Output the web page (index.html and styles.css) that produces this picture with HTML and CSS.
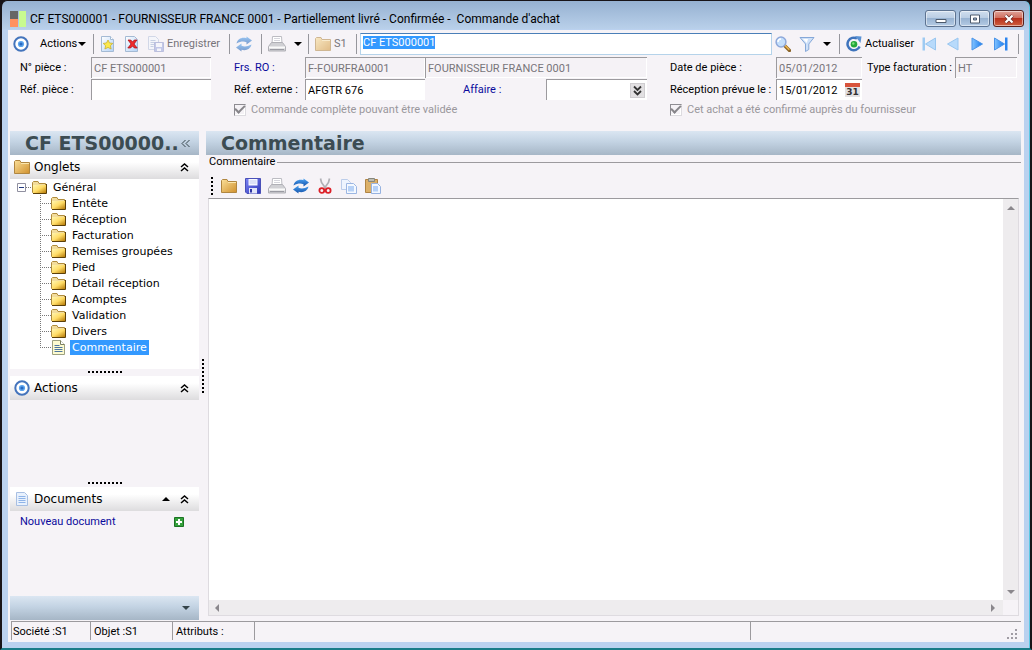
FILE: index.html
```html
<!DOCTYPE html>
<html lang="fr">
<head>
<meta charset="utf-8">
<title>Commande d'achat</title>
<link rel="stylesheet" href="styles.css">
</head>
<body>
<svg class="sprite" aria-hidden="true">
  <defs>
    <linearGradient id="gFolder" x1="0" y1="0" x2="1" y2="1"><stop offset="0" stop-color="#fbe09a"/><stop offset="1" stop-color="#d0902c"/></linearGradient>
    <linearGradient id="gTree" x1="0" y1="0" x2="1" y2="1"><stop offset="0" stop-color="#fff6b0"/><stop offset=".5" stop-color="#ffdc66"/><stop offset="1" stop-color="#b67a08"/></linearGradient>
    <linearGradient id="gPage" x1="0" y1="0" x2="1" y2="1"><stop offset="0" stop-color="#ffffff"/><stop offset="1" stop-color="#b4d2f6"/></linearGradient>
    <linearGradient id="gPlay" x1="0" y1="0" x2="1" y2="0"><stop offset="0" stop-color="#84c4ff"/><stop offset="1" stop-color="#1478ee"/></linearGradient>
    <linearGradient id="gSync" x1="0" y1="0" x2="0" y2="1"><stop offset="0" stop-color="#4aa4f4"/><stop offset="1" stop-color="#1450a8"/></linearGradient>
    <linearGradient id="gFloppy" x1="0" y1="0" x2="1" y2="1"><stop offset="0" stop-color="#7c84f4"/><stop offset="1" stop-color="#3038b8"/></linearGradient>
  </defs>
  <symbol id="target" viewBox="0 0 16 16"><circle cx="8" cy="8" r="6.7" fill="#fff" stroke="#4474bc" stroke-width="2"/><circle cx="8" cy="8" r="3.1" fill="#5ba4ee"/><circle cx="8" cy="8" r="1.6" fill="#2968c0"/></symbol>
  <symbol id="page-star" viewBox="0 0 16 16"><path d="M1.500.500h9l3 3v12h-12z" fill="url(#gPage)" stroke="#a4bad4"/><path d="M10.500.500v3h3" fill="#fff" stroke="#a4bad4"/><path d="M8 4l1.500 3 3.300.4-2.400 2.300.7 3.300L8 11.400 4.900 13l.7-3.300-2.400-2.300L6.500 7z" fill="#fbe94c" stroke="#ccb02c" stroke-width=".8"/></symbol>
  <symbol id="page-x" viewBox="0 0 16 16"><path d="M1.500.500h9l3 3v12h-12z" fill="url(#gPage)" stroke="#a4bad4"/><path d="M4 4h2.800L8.500 6l1.800-2H13l-3 4 3.200 4h-2.800L8.500 10l-1.900 2H3.800L7 8z" fill="#ee2b2c" stroke="#a80a12" stroke-width=".7"/></symbol>
  <symbol id="page-save" viewBox="0 0 16 16"><path d="M.500.500h7l3 3v10H.500z" fill="#f4f7fd" stroke="#b4c1da"/><path d="M2.500 4.500h5M2.500 6.500h6M2.500 8.500h4M2.500 10.500h3" stroke="#9fb4d4"/><path d="M6.500 6.500h9v9h-9z" fill="#98a5dc" stroke="#8b96c8"/><path d="M8 7h6v4H8zM9 12.500h4V15H9z" fill="#f5f7fe"/></symbol>
  <symbol id="sync" viewBox="0 0 16 16"><path d="M.500 7.500C1.500 3 6 .800 10.500 2.300V.500L16 4.600l-5.500 4V6.300C7.500 5 4.500 5.500.500 7.500z" fill="url(#gSync)"/><path d="M15.500 8.500c-1 4.500-5.500 6.700-10 5.200v1.800L0 11.400l5.500-4v2.300c3 1.300 6 .8 10-1.200z" fill="url(#gSync)"/></symbol>
  <symbol id="printer" viewBox="0 0 18 16"><path d="M4.500.500h9l.5 7H4z" fill="#fff" stroke="#bcbcc2"/><path d="M6 2.500h6M6 4.500h6" stroke="#d5d5dc"/><path d="M3.500 6.500h11l3 4v4.500H.500v-4.500z" fill="#d0d0d4" stroke="#b0b0b6"/><path d="M1 10.500h16v2H1z" fill="#fafafa"/><path d="M2 13.500h14" stroke="#9a9aa2"/></symbol>
  <symbol id="folder" viewBox="0 0 16 16"><path d="M.500 14.500V2.500l1-1H6l1 2h8.500v11z" fill="url(#gFolder)" stroke="#b08640"/><path d="M7 4.500h8" stroke="#fbe6ac"/></symbol>
  <symbol id="tree-folder" viewBox="0 0 15 13"><path d="M.500 11.500v-10L1.500.500H6l1 2h6.500v9z" fill="#f2dc9c" stroke="#b08c3c"/><path d="M1 4h13v8H1z" fill="url(#gTree)"/><path d="M14.500 3v9.500H1" fill="none" stroke="#5c4008"/></symbol>
  <symbol id="note" viewBox="0 0 13 15"><path d="M.500.500h8l4 4v10H.500z" fill="#fdfbd0" stroke="#9ca080"/><path d="M8.500.500v4h4" fill="#fff" stroke="#7c8060"/><path d="M2.500 5.500h5M2.500 7.500h8M2.500 9.500h8M2.500 11.500h8" stroke="#4d75a0"/></symbol>
  <symbol id="doc" viewBox="0 0 16 16"><path d="M2.500 1.500h8l3 3v10h-11z" fill="#e8f1fd" stroke="#a8bfe2"/><path d="M4.500 5.500h7M4.500 7.500h7M4.500 9.500h7M4.500 11.500h7" stroke="#8fb4e8"/></symbol>
  <symbol id="lens" viewBox="0 0 16 16"><path d="M9.500 9.500l5 5" stroke="#8a6428" stroke-width="3.200" stroke-linecap="round"/><path d="M9.800 9.300l4.500 4.500" stroke="#eeb64c" stroke-width="1.500"/><circle cx="6" cy="6" r="4.900" fill="#c4dffc" stroke="#8ea8da" stroke-width="1.500"/><path d="M3 6a3 3 0 0 1 3-3" stroke="#fff" stroke-width="1.500" fill="none"/></symbol>
  <symbol id="funnel" viewBox="0 0 16 16"><path d="M1 1.500h14L9.800 8v5.500L6.500 15.500V8z" fill="#cfe1f8" stroke="#86a8d8"/><path d="M4 3h5L7.800 7z" fill="#fff"/></symbol>
  <symbol id="reload" viewBox="0 0 16 16"><path d="M13.600 10.500A6.300 6.300 0 1 1 11 2.500" fill="none" stroke="#3f74bc" stroke-width="2.500"/><path d="M9 0l6.500.500L14.500 7z" fill="#5a92d4"/><circle cx="8" cy="8.300" r="3.300" fill="#25a83a"/><circle cx="7.300" cy="7.500" r="1.200" fill="#7fe07c"/></symbol>
  <symbol id="last" viewBox="0 0 16 16"><path d="M1.500 2L11.500 8l-10 6z" fill="url(#gPlay)" stroke="#4b94e8"/><path d="M12 1.500h2.500v13H12z" fill="#2c84ee"/></symbol>
  <symbol id="next" viewBox="0 0 16 16"><path d="M3 2l10.500 6L3 14z" fill="url(#gPlay)" stroke="#4b94e8"/></symbol>
  <symbol id="first" viewBox="0 0 16 16"><path d="M14.500 2L4.500 8l10 6z" fill="#b8dafb" stroke="#98c6f0"/><path d="M1.500 1.500H4v13H1.500z" fill="#9ecaf2"/></symbol>
  <symbol id="prev" viewBox="0 0 16 16"><path d="M13 2L2.500 8 13 14z" fill="#b8dafb" stroke="#98c6f0"/></symbol>
  <symbol id="floppy" viewBox="0 0 16 16"><path d="M.500.500h15v15H2L.500 14z" fill="url(#gFloppy)" stroke="#4a50b8"/><path d="M3.500 1h9v6.500h-9z" fill="#f6f8ff"/><path d="M4.500 3h7M4.500 5h7" stroke="#c4cbee"/><path d="M4 10h8v5.500H4z" fill="#e2e5f8"/><path d="M5 11h2v3.500H5z" fill="#3036a4"/></symbol>
  <symbol id="scissors" viewBox="0 0 16 16"><path d="M3.500.500l1 4 4.300 6M12.500.500l-1 4-4.300 6" fill="none" stroke="#b0b0b6" stroke-width="1.700"/><circle cx="4.800" cy="12.500" r="2.400" fill="none" stroke="#dc2028" stroke-width="1.800"/><circle cx="11.200" cy="12.500" r="2.400" fill="none" stroke="#dc2028" stroke-width="1.800"/></symbol>
  <symbol id="copy" viewBox="0 0 16 16"><path d="M.500 1.500h6l3 3v7h-9z" fill="#eef4fe" stroke="#bccdea"/><path d="M5.500 5.500h7l3 3v7h-10z" fill="#f5f9ff" stroke="#9cb6e2"/><path d="M7 8h6v5.500H7z" fill="#b7d1f6"/></symbol>
  <symbol id="paste" viewBox="0 0 16 16"><path d="M.500 1.500h12v13H.500z" fill="#dcb068" stroke="#b08444"/><path d="M3.500.500h6v3h-6z" fill="#bcbcb4" stroke="#87877c"/><path d="M6.500 5.500h6l3 3v7h-9z" fill="#f2f7ff" stroke="#97b2e0"/><path d="M8 8h5v5.500H8z" fill="#b4d0f8"/></symbol>
  <symbol id="caret" viewBox="0 0 8 4"><path d="M0 0h8L4 4z"/></symbol>
  <symbol id="up" viewBox="0 0 8 4"><path d="M0 4h8L4 0z"/></symbol>
  <symbol id="chev-up" viewBox="0 0 9 9"><path d="M1 4l3.500-3L8 4M1 8l3.500-3L8 8" fill="none" stroke="#000" stroke-width="1.500"/></symbol>
</svg>

<div class="window">
  <header class="titlebar">
    <svg class="logo" viewBox="0 0 16 16" aria-hidden="true"><path d="M0 0h8v8H0z" fill="#666"/><path d="M0 8h8v8H0z" fill="#ff9160"/><path d="M9 0h7v16H9z" fill="#c8fa90"/></svg>
    <h1 class="caption">CF ETS000001 - FOURNISSEUR FRANCE 0001 - Partiellement livré - Confirmée -&nbsp; Commande d'achat</h1>
    <button class="winbtn" aria-label="Réduire"><svg viewBox="0 0 12 10"><path d="M1 5.500h10v3H1z" fill="#fff" stroke="#4c5a6c"/></svg></button>
    <button class="winbtn" aria-label="Agrandir"><svg viewBox="0 0 12 10"><path d="M1.500 1h9v8h-9z" fill="#fff" stroke="#4c5a6c"/><path d="M4.500 4h3v2h-3z" fill="#a4bad4" stroke="#4c5a6c"/></svg></button>
    <button class="winbtn close" aria-label="Fermer"><svg viewBox="0 0 12 10"><path d="M2.500 1.500l7 7m0-7l-7 7" stroke="#6a2c28" stroke-width="3.600"/><path d="M2.500 1.500l7 7m0-7l-7 7" stroke="#fff" stroke-width="2.200"/></svg></button>
  </header>

  <div class="client">
    <div class="toolbar">
      <div class="group first"><svg class="i"><use href="#target"/></svg><button class="tool menu">Actions<svg class="caret"><use href="#caret"/></svg></button></div>
      <div class="group save">
        <button class="tool" aria-label="Nouveau"><svg class="i"><use href="#page-star"/></svg></button>
        <button class="tool" aria-label="Supprimer"><svg class="i"><use href="#page-x"/></svg></button>
        <button class="tool muted"><svg class="i faded"><use href="#page-save"/></svg>Enregistrer</button>
      </div>
      <div class="group sync"><button class="tool" aria-label="Rafraîchir"><svg class="i faded"><use href="#sync"/></svg></button></div>
      <div class="group print"><button class="tool" aria-label="Imprimer"><svg class="i wide"><use href="#printer"/></svg></button><button class="tool" aria-label="Options d'impression"><svg class="caret"><use href="#caret"/></svg></button></div>
      <div class="group site"><button class="tool muted"><svg class="i faded"><use href="#folder"/></svg>S1</button></div>
      <div class="group search"><input class="find" id="find" aria-label="Pièce" value="CF ETS000001" spellcheck="false" autofocus></div>
      <div class="lookup">
        <button class="tool" aria-label="Rechercher"><svg class="i"><use href="#lens"/></svg></button>
        <button class="tool" aria-label="Filtrer"><svg class="i"><use href="#funnel"/></svg></button>
        <button class="tool" aria-label="Options de filtre"><svg class="caret"><use href="#caret"/></svg></button>
      </div>
      <div class="group nav">
        <button class="tool act"><svg class="i"><use href="#reload"/></svg>Actualiser</button>
        <button class="tool" aria-label="Premier"><svg class="i"><use href="#first"/></svg></button>
        <button class="tool" aria-label="Précédent"><svg class="i"><use href="#prev"/></svg></button>
        <button class="tool" aria-label="Suivant"><svg class="i"><use href="#next"/></svg></button>
        <button class="tool" aria-label="Dernier"><svg class="i"><use href="#last"/></svg></button>
      </div>
      <div class="group end"></div>
    </div>

    <form class="fields">
      <label class="c1" for="piece">N° pièce :</label><input class="c2" id="piece" value="CF ETS000001" disabled>
      <label class="c4 blue" for="frs">Frs. RO :</label><input class="c5" id="frs" value="F-FOURFRA0001" disabled>
      <input class="c6" aria-label="Nom du fournisseur" value="FOURNISSEUR FRANCE 0001" disabled>
      <label class="c8" for="date">Date de pièce :</label><input class="c9" id="date" value="05/01/2012" disabled>
      <label class="c11" for="type">Type facturation :</label><input class="c12" id="type" value="HT" disabled>

      <label class="c1" for="ref">Réf. pièce :</label><input class="c2" id="ref">
      <label class="c4" for="ext">Réf. externe :</label><input class="c5" id="ext" value="AFGTR 676">
      <div class="c6 affaire"><label class="blue" for="aff">Affaire :</label><div class="combo"><input id="aff"><button type="button" class="drop" aria-label="Choisir"><svg viewBox="0 0 9 11"><path d="M1 1.500L4.500 5 8 1.500M1 6l3.500 3.500L8 6" fill="none" stroke="#333" stroke-width="1.800"/></svg></button></div></div>
      <label class="c8" for="prev-date">Réception prévue le :</label>
      <div class="c9 combo"><input id="prev-date" value="15/01/2012"><button type="button" class="cal" aria-label="Calendrier">31</button></div>

      <label class="check left"><input type="checkbox" checked disabled>Commande complète pouvant être validée</label>
      <label class="check right"><input type="checkbox" checked disabled>Cet achat a été confirmé auprès du fournisseur</label>
    </form>

    <div class="body">
      <aside class="side">
        <div class="banner"><h2>CF ETS00000..</h2><button class="tool" aria-label="Replier"><svg class="dbl" viewBox="0 0 9 9"><path d="M4.500 1L1 4.500 4.500 8M8.500 1L5 4.500 8.500 8" fill="none" stroke="#35444a"/></svg></button></div>
        <div class="head"><svg class="i"><use href="#folder"/></svg><h3>Onglets</h3><button class="tool" aria-label="Replier Onglets"><svg class="chev"><use href="#chev-up"/></svg></button></div>
        <div class="tree">
          <div class="root"><svg class="box" viewBox="0 0 9 9"><path d="M.500.500h8v8h-8z" fill="#fff" stroke="#9090a0"/><path d="M2 4.500h5" stroke="#223a80"/></svg><svg class="fold"><use href="#tree-folder"/></svg><a href="#general">Général</a></div>
          <ul>
            <li><svg class="fold"><use href="#tree-folder"/></svg><a href="#entete">Entête</a></li>
            <li><svg class="fold"><use href="#tree-folder"/></svg><a href="#reception">Réception</a></li>
            <li><svg class="fold"><use href="#tree-folder"/></svg><a href="#facturation">Facturation</a></li>
            <li><svg class="fold"><use href="#tree-folder"/></svg><a href="#remises">Remises groupées</a></li>
            <li><svg class="fold"><use href="#tree-folder"/></svg><a href="#pied">Pied</a></li>
            <li><svg class="fold"><use href="#tree-folder"/></svg><a href="#detail">Détail réception</a></li>
            <li><svg class="fold"><use href="#tree-folder"/></svg><a href="#acomptes">Acomptes</a></li>
            <li><svg class="fold"><use href="#tree-folder"/></svg><a href="#validation">Validation</a></li>
            <li><svg class="fold"><use href="#tree-folder"/></svg><a href="#divers">Divers</a></li>
            <li><svg class="fold leaf"><use href="#note"/></svg><a class="on" href="#commentaire">Commentaire</a></li>
          </ul>
        </div>
        <div class="grip"></div>
        <div class="head"><svg class="i"><use href="#target"/></svg><h3>Actions</h3><button class="tool" aria-label="Replier Actions"><svg class="chev"><use href="#chev-up"/></svg></button></div>
        <div class="void"></div>
        <div class="grip"></div>
        <div class="head"><svg class="i"><use href="#doc"/></svg><h3>Documents</h3><button class="tool" aria-label="Monter"><svg class="caret"><use href="#up"/></svg></button><button class="tool" aria-label="Replier Documents"><svg class="chev"><use href="#chev-up"/></svg></button></div>
        <div class="docs"><a href="#nouveau">Nouveau document</a><button class="tool" aria-label="Ajouter"><svg class="plus" viewBox="0 0 10 10"><path d="M.500.500h9v9h-9z" fill="#35a03c" stroke="#1c7424"/><path d="M5 2v6M2 5h6" stroke="#fff" stroke-width="2"/></svg></button></div>
        <div class="foot"><button class="tool" aria-label="Plus"><svg class="caret"><use href="#caret"/></svg></button></div>
      </aside>
      <div class="splitter"><span></span></div>
      <main class="main">
        <div class="banner"><h2>Commentaire</h2></div>
        <fieldset>
          <legend>Commentaire</legend>
          <div class="tools">
            <span class="handle"></span>
            <button class="tool" aria-label="Ouvrir"><svg class="i"><use href="#folder"/></svg></button>
            <button class="tool" aria-label="Enregistrer"><svg class="i"><use href="#floppy"/></svg></button>
            <button class="tool printing" aria-label="Imprimer"><svg class="i wide"><use href="#printer"/></svg></button>
            <button class="tool" aria-label="Actualiser"><svg class="i"><use href="#sync"/></svg></button>
            <button class="tool" aria-label="Couper"><svg class="i"><use href="#scissors"/></svg></button>
            <button class="tool" aria-label="Copier"><svg class="i"><use href="#copy"/></svg></button>
            <button class="tool" aria-label="Coller"><svg class="i"><use href="#paste"/></svg></button>
          </div>
          <div class="editor">
            <textarea aria-label="Commentaire"></textarea>
            <div class="bar v"><svg viewBox="0 0 8 4"><use href="#up"/></svg><svg viewBox="0 0 8 4"><use href="#caret"/></svg></div>
            <div class="bar h"><svg viewBox="0 0 4 8"><path d="M4 0v8L0 4z"/></svg><svg viewBox="0 0 4 8"><path d="M0 0v8l4-4z"/></svg></div>
          </div>
        </fieldset>
      </main>
    </div>

    <footer class="status">
      <span class="s1">Société :S1</span><span class="s2">Objet :S1</span><span class="s3">Attributs :</span><span class="s4"></span><span class="s5"><svg viewBox="0 0 11 11"><path d="M9 0h2v2H9zM9 4h2v2H9zM5 4h2v2H5zM9 8h2v2H9zM5 8h2v2H5zM1 8h2v2H1z" fill="#a09ca4"/></svg></span>
    </footer>
  </div>
</div>
<script src="app.js"></script>
</body>
</html>
```
FILE: app.js
```js
const find = document.getElementById("find");
find.focus();
find.select();
```
FILE: styles.css
```css
* { box-sizing: border-box; }
html, body { height: 100%; }
body {
  margin: 0;
  background: #181418;
  font: 11px/14px Roboto, "Liberation Sans", Arial, sans-serif;
  color: #000;
}
h1, h2, h3, ul, fieldset { margin: 0; padding: 0; border: 0; font-weight: normal; }
button, input, textarea { font: inherit; color: inherit; border: 0; margin: 0; padding: 0; }
button { background: none; }
a { color: inherit; text-decoration: none; }
svg { display: block; flex: none; }
.sprite { position: absolute; width: 0; height: 0; }
.i { width: 16px; height: 16px; }
.i.wide { width: 18px; }
.faded { opacity: .55; }
.caret { width: 8px; height: 4px; }
.chev { width: 9px; height: 9px; }

.window {
  display: flex;
  flex-direction: column;
  height: 100%;
  padding: 2px 6px 6px;
  border: 2px solid #181418;
  border-top-width: 1px;
  border-bottom-color: #1a7c88;
  border-radius: 7px 7px 0 0;
  box-shadow: inset -1px 0 #5cc8e4;
  background: #bad1ef linear-gradient(#96b1d1, #b9d0ea 28px, #bad1ef 28px);
}
.titlebar { display: flex; align-items: center; height: 27px; padding: 4px 0 0 2px; gap: 3px; flex: none; }
.logo { width: 16px; height: 16px; }
.caption { flex: 1; font: 12px/16px Roboto, "Noto Sans", sans-serif; white-space: nowrap; overflow: hidden; padding-left: 1px; }
.winbtn {
  display: flex; align-items: center; justify-content: center;
  width: 31px; height: 17px;
  border: 1px solid #5d7391; border-radius: 3px;
  background: linear-gradient(#d0deee, #b8cce3 50%, #98b3d2 50%, #b4cbe4);
  box-shadow: inset 0 0 0 1px rgba(255, 255, 255, .5);
}
.winbtn svg { width: 12px; height: 10px; }
.winbtn.close { border-color: #59201c; background: linear-gradient(#e0a298, #cf6b5a 50%, #b8301c 50%, #cf6040); }

.client { flex: 1; display: flex; flex-direction: column; min-height: 0; background: #f6f3f7; }

.toolbar { display: flex; align-items: center; height: 27px; padding-left: 5px; flex: none; }
.group { display: flex; align-items: center; height: 20px; border-left: 1px solid #96969c; padding-left: 6px; gap: 8px; flex: none; }
.group.first { border: 0; padding: 0; width: 80px; gap: 11px; }
.tool { display: flex; align-items: center; gap: 3px; white-space: nowrap; }
.tool.menu { gap: 1px; }
.muted { color: #77747a; }
.save { width: 136px; }
.sync { width: 32px; }
.print { width: 47px; }
.site { width: 48px; }
.search { flex: 1; padding-left: 3px; }
.find {
  flex: 1; min-width: 0; height: 22px; padding: 0 2px 2px; outline: 0;
  background: #fff; border: 1px solid #b5d3ea; border-top-color: #4a7fb8;
}
.find::selection { background: #3399ff; color: #fff; }
.lookup { display: flex; align-items: center; gap: 8px; width: 67px; padding-left: 3px; flex: none; }
.nav { width: 179px; }
.act { width: 67px; }
.end { width: 6px; padding: 0; }

.fields {
  display: grid;
  grid-template-columns: 71px 120px 23px 71px 120px 1fr 23px 106px 86px 5px 88px 62px;
  grid-template-rows: 21px 21px 17px;
  row-gap: 1px;
  padding: 0 7px 13px 12px;
  flex: none;
}
.fields > label { align-self: center; white-space: nowrap; }
.fields input:not([type]) {
  width: 100%; min-width: 0; height: 21px; padding: 0 0 0 2px;
  border: solid #9c9a9e; border-width: 1px 0 0 1px; background: #fff;
}
.fields input:disabled { background: #f5f2f6; color: #78757a; box-shadow: inset 0 -1px #fff, inset -1px 0 #fff; }
.c1 { grid-column: 1; } .c2 { grid-column: 2; } .c4 { grid-column: 4; } .c5 { grid-column: 5; }
.c6 { grid-column: 6; } .c8 { grid-column: 8; } .c9 { grid-column: 9; } .c11 { grid-column: 11; } .c12 { grid-column: 12; }
.blue, .docs a { color: #0a0a9c; }
.affaire { display: grid; grid-template-columns: 1fr 101px; align-items: center; padding-left: 38px; }
.combo { display: flex; align-items: center; background: #fff; border-top: 1px solid #9c9a9e; height: 21px; }
.fields .combo input { flex: 1; border-top: 0; height: 20px; }
.drop { width: 15px; height: 15px; margin: 0 2px; background: #e2e0e2; border: 1px solid #cfcdd0; flex: none; display: flex; align-items: center; justify-content: center; }
.drop svg { width: 9px; height: 11px; }
.cal {
  width: 15px; height: 14px; margin-right: 2px; flex: none;
  border-top: 4px solid #d8543c; background: #e3e1e2;
  font: bold 9px/10px "DejaVu Sans", sans-serif; color: #333;
}
.check { grid-row: 3; display: flex; align-items: center; gap: 5px; color: #9a979c; }
.check.left { grid-column: 4 / 7; }
.check.right { grid-column: 8 / 13; }
.check input {
  appearance: none; width: 12px; height: 12px;
  display: flex; align-items: center; justify-content: center;
  border: 1px solid #8e8c92; border-right-color: #dddbe0; border-bottom-color: #dddbe0;
}
.check input:checked::before {
  content: ""; width: 8px; height: 4px; margin-bottom: 3px;
  border: solid #87858a; border-width: 0 0 2px 2px;
  transform: rotate(-45deg);
}
.check .fields input:disabled { box-shadow: none; }

.body { flex: 1; display: flex; min-height: 0; padding: 0 3px 0 2px; }
.side { width: 189px; flex: none; display: flex; flex-direction: column; font-family: "DejaVu Sans", Verdana, sans-serif; }
.banner {
  display: flex; align-items: center; height: 24px; padding: 0 9px 0 15px; flex: none;
  background: linear-gradient(#dbe6f2, #c3d3e3 45%, #a6b6c6);
}
.banner h2 { flex: 1; font: bold 19px/24px "DejaVu Sans", Verdana, sans-serif; color: #3c4c52; white-space: nowrap; }
.dbl { width: 9px; height: 9px; }
.head {
  display: flex; align-items: center; gap: 10px; height: 24px; padding: 0 10px 0 4px; flex: none;
  background: linear-gradient(#fff 30%, #dddcde);
}
.head h3 { flex: 1; font-size: 12px; line-height: 24px; margin-left: -6px; }
.tree { background: #fff; height: 190px; flex: none; font-size: 11px; line-height: 15px; }
.root { display: flex; align-items: center; height: 16px; padding-left: 7px; }
.box { width: 9px; height: 9px; }
.root .box + .fold { width: 21px; padding-left: 6px; background: repeating-linear-gradient(90deg, #777 0 1px, transparent 1px 2px) 0 6px / 6px 1px no-repeat; }
.fold { width: 15px; height: 13px; margin-right: 4px; }
.root a, .tree li a { padding: 0 2px; white-space: nowrap; }
.tree ul { list-style: none; }
.tree li {
  display: flex; align-items: center; height: 16px; margin-left: 30px; padding-left: 11px;
  background:
    repeating-linear-gradient(#777 0 1px, transparent 1px 2px) 0 0 / 1px 16px no-repeat,
    repeating-linear-gradient(90deg, #777 0 1px, transparent 1px 2px) 0 8px / 11px 1px no-repeat;
}
.tree li:last-child { background-size: 1px 8px, 11px 1px; }
.fold.leaf { height: 15px; }
.tree a.on { background: #3399ff; color: #fff; }
.grip {
  height: 7px; flex: none;
  background: repeating-linear-gradient(90deg, #000 0 2px, transparent 2px 4px) center 2px / 34px 2px no-repeat;
}
.void { height: 80px; flex: none; }
.docs { flex: 1; display: flex; justify-content: space-between; align-items: flex-start; padding: 4px 15px 0 10px; font-family: Roboto, "Liberation Sans", Arial, sans-serif; }
.plus { width: 10px; height: 10px; margin-top: 2px; }
.foot {
  display: flex; align-items: center; justify-content: flex-end; height: 24px; padding-right: 9px; flex: none;
  background: linear-gradient(#dbe6f2, #c3d3e3 45%, #a6b6c6); fill: #35444a;
}
.splitter { width: 7px; flex: none; display: flex; align-items: center; justify-content: center; }
.splitter span { width: 2px; height: 34px; background: repeating-linear-gradient(#000 0 2px, transparent 2px 4px); }
.main { flex: 1; display: flex; flex-direction: column; min-width: 0; }
fieldset { flex: 1; display: flex; flex-direction: column; min-width: 0; min-height: 0; border-top: 1px solid #9c9a9e; }
legend { padding: 0 2px 0 3px; }
.tools { display: flex; align-items: center; gap: 8px; height: 29px; padding: 5px 0 0 5px; flex: none; }
.printing { width: 16px; justify-content: center; }
.handle { width: 2px; height: 18px; background: repeating-linear-gradient(#000 0 2px, transparent 2px 4px); }
.editor {
  flex: 1; display: grid; grid-template: 1fr 15px / 1fr 15px; min-height: 0;
  margin: 0 2px 4px 2px; border: 1px solid #dedbe0; border-top-color: #9c9a9e;
}
.editor textarea { width: 100%; height: 100%; resize: none; background: #fff; outline: 0; }
.bar { display: flex; justify-content: space-between; align-items: center; background: #eeecee; fill: #8a878c; }
.bar.v { flex-direction: column; padding: 7px 0 6px; }
.bar.h { padding: 0 8px 0 6px; }
.bar svg { width: 8px; height: 4px; }
.bar.h svg { width: 4px; height: 8px; }

.status { display: flex; height: 20px; margin: 1px 3px 1px; border-top: 1px solid #9c9a9e; line-height: 19px; flex: none; white-space: nowrap; }
.status span { border-left: 1px solid #9c9a9e; height: 18px; padding-left: 3px; }
.status .s1 { width: 79px; padding-left: 1px; }
.s2 { width: 82px; }
.s3 { width: 82px; }
.s4 { flex: 15; }
.s5 { flex: 8; display: flex; justify-content: flex-end; align-items: flex-end; padding-right: 4px; }
.s5 svg { width: 11px; height: 11px; }
```
